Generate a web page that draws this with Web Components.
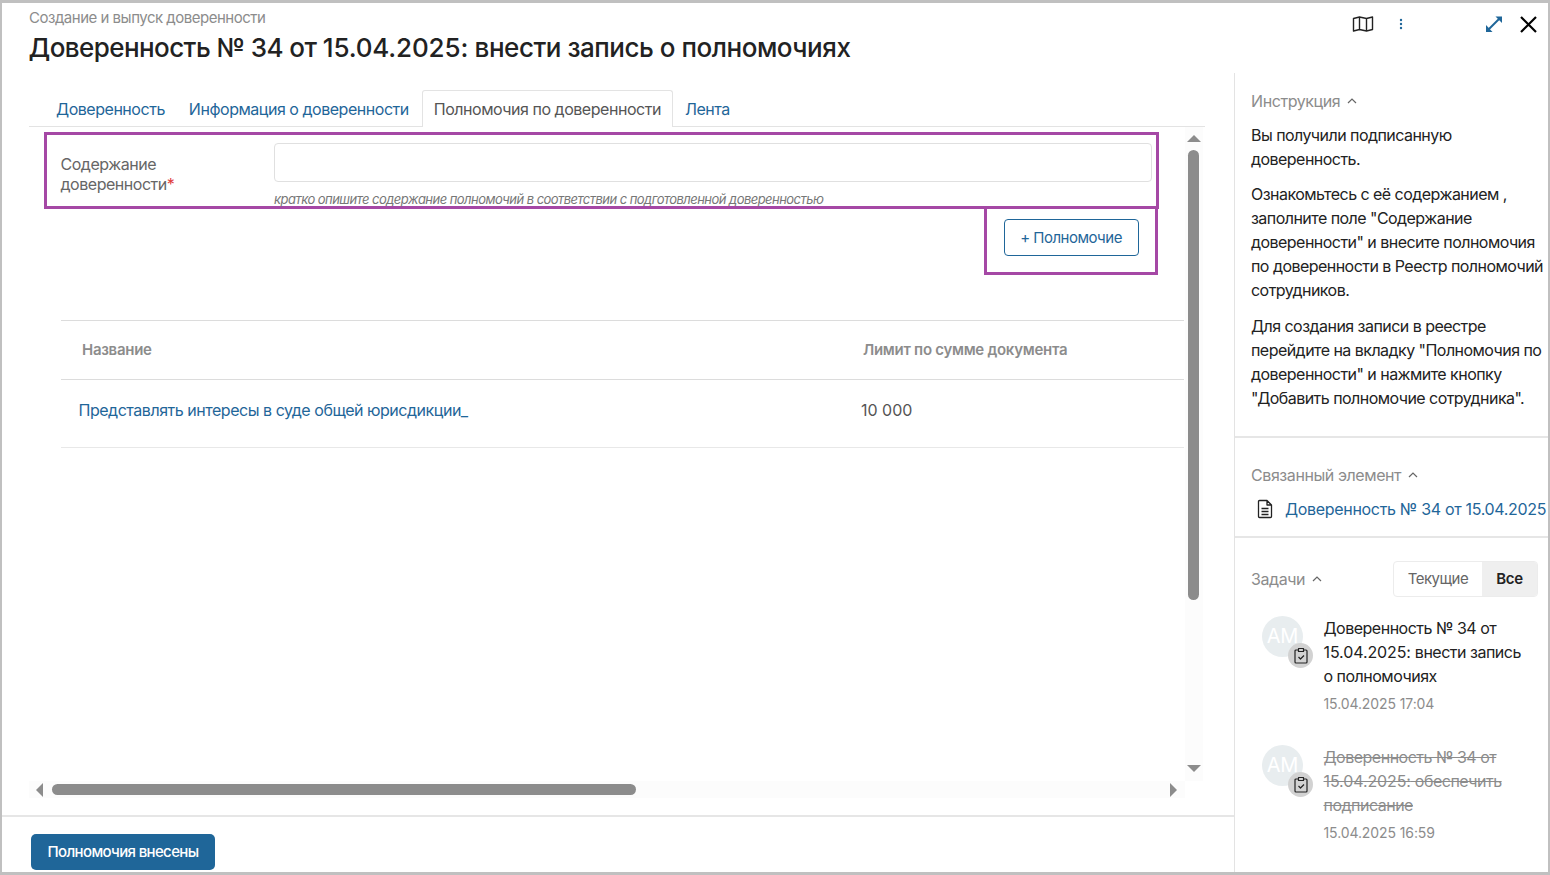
<!DOCTYPE html>
<html lang="ru">
<head>
<meta charset="utf-8">
<title>Доверенность</title>
<style>
  html, body { margin: 0; height: 100%; }
  body { font-family: Inter, "Noto Sans", sans-serif; color: #222; overflow: hidden; }
</style>
</head>
<body>
<task-page></task-page>

<template id="task-page-tpl">
  <style>
    :host { display: flex; flex-direction: column; box-sizing: border-box; width: 1550px; height: 875px; border: solid #c0c0c0; border-width: 3px 2px; background: #fff; }
    .top { height: 70px; flex: none; display: flex; justify-content: space-between; padding-left: 27px; box-sizing: border-box; }
    .crumb { font-size: 15px; line-height: 18px; margin-top: 6px; color: #8c8c8c; letter-spacing: -.49px; }
    h1 { margin: 5px 0 0 -.5px; font-size: 26px; line-height: 32px; font-weight: 500; letter-spacing: -.47px; color: #222; }
    h1 .lead { letter-spacing: -.57px; }
    h1 .date { letter-spacing: -.15px; }
    .actions { display: flex; align-items: flex-start; padding: 11px 10px 0 0; }
    .actions svg { display: block; }
    .body { flex: 1; min-height: 0; display: flex; }
    .main { width: 1232px; flex: none; display: flex; flex-direction: column; }
    .work { flex: 1; min-height: 0; padding: 17px 29px 0 27px; display: flex; flex-direction: column; }
    .foot { height: 57px; flex: none; box-sizing: border-box; border-top: 2px solid #e6e6e6; padding: 17px 0 0 29px; }
    .foot button { display: block; height: 36px; width: 184px; padding: 0 0 2px; border: 0; border-radius: 5px; background: #1f6699; color: #fff; font: 500 15px Inter, sans-serif; letter-spacing: -.65px; }
    aside { flex: 1; min-width: 0; border-left: 1px solid #e3e3e3; }
  </style>
  <div class="top">
    <div>
      <div class="crumb">Создание и выпуск доверенности</div>
      <h1><span class="lead">Доверенность № 34 от </span><span class="date">15.04.2025:</span> внести запись о полномочиях</h1>
    </div>
    <div class="actions">
      <svg width="22" height="18" viewBox="0 0 22 18" fill="none" stroke="#222" stroke-width="1.4" stroke-linejoin="round" style="margin:1px 25px 0 0"><path d="M1.500 3.500 7.500 2l7 1.500 6-1.500v12.500l-6 1.500-7-1.500-6 1.500zM7.500 2v12.500M14.500 3.500V16"/></svg>
      <svg width="4" height="12" viewBox="0 0 4 12" fill="#1f6699" style="margin:4px 81px 0 0"><circle cx="2" cy="2" r="1.2"/><circle cx="2" cy="6" r="1.2"/><circle cx="2" cy="10" r="1.2"/></svg>
      <svg width="20" height="20" viewBox="0 0 20 20" fill="none" stroke="#1f6699" stroke-width="2" style="margin-right:14px"><path d="M5 15 15 5"/><path d="M11.500 2.500H18V9z" fill="#1f6699" stroke="none"/><path d="M2 11v7h6.500z" fill="#1f6699" stroke="none"/></svg>
      <svg width="20" height="20" viewBox="0 0 20 20" fill="none" stroke="#000" stroke-width="2.200"><path d="M3 3 18 18M18 3 3 18"/></svg>
    </div>
  </div>
  <div class="body">
    <div class="main">
      <div class="work">
        <tab-bar></tab-bar>
        <scroll-pane>
          <power-form></power-form>
          <power-table></power-table>
        </scroll-pane>
      </div>
      <div class="foot"><button>Полномочия внесены</button></div>
    </div>
    <aside>
      <side-section heading="Инструкция" pad="16px 2px 26px 16px" divider>
        <p style="margin:0 0 11px">Вы получили подписанную доверенность.</p>
        <p style="margin:0 0 12px">Ознакомьтесь с её содержанием , заполните поле "Содержание доверенности" и внесите полномочия по доверенности в Реестр полномочий сотрудников.</p>
        <p style="margin:0">Для создания записи в реестре перейдите на вкладку "Полномочия по доверенности" и нажмите кнопку "Добавить полномочие сотрудника".</p>
      </side-section>
      <side-section heading="Связанный элемент" pad="25px 0 15px 16px" divider>
        <linked-doc>Доверенность № 34 от 15.04.2025</linked-doc>
      </side-section>
      <side-section heading="Задачи" pad="29px 10px 0 16px" toggle>
        <task-item when="15.04.2025 17:04">Доверенность № 34 от <span style="letter-spacing:-.1px">15.04.2025:</span> внести запись<br>о полномочиях</task-item>
        <task-item when="15.04.2025 16:59" done>Доверенность № 34 от <span style="letter-spacing:-.1px">15.04.2025:</span> обеспечить<br>подписание</task-item>
      </side-section>
    </aside>
  </div>
</template>

<template id="tab-bar-tpl">
  <style>
    :host { display: flex; flex: none; height: 37px; box-sizing: border-box; border-bottom: 1px solid #e3e3e3; padding-left: 15px; font-size: 16px; letter-spacing: -.47px; }
    a { display: block; padding: 0 12px; line-height: 38px; color: #1f6699; }
    a.on { color: #555; border: 1px solid #e3e3e3; border-bottom: 0; margin-left: 1px; height: 37px; line-height: 37px; background: #fff; border-radius: 3px 3px 0 0; box-sizing: border-box; padding: 0 11px; }
  </style>
  <a>Доверенность</a><a>Информация о доверенности</a><a class="on">Полномочия по доверенности</a><a>Лента</a>
</template>

<template id="scroll-pane-tpl">
  <style>
    :host { display: grid; flex: none; grid-template-columns: 1156px 18px; grid-template-rows: 654px 17px; height: 671px; }
    .view { overflow: hidden; min-width: 0; }
    .v, .h { background: #fcfcfc; position: relative; }
    .corner { background: #fff; }
    .thumb { position: absolute; background: #8c8c8c; border-radius: 6px; }
    .v .thumb { left: 3px; width: 11px; top: 23px; height: 450px; }
    .h .thumb { top: 3px; height: 11px; left: 23px; width: 584px; }
    i { position: absolute; width: 0; height: 0; border: solid transparent; }
    .up { left: 2px; top: 8px; border-width: 0 7px 7px; border-bottom-color: #8c8c8c; }
    .dn { left: 2px; top: 638px; border-width: 7px 7px 0; border-top-color: #8c8c8c; }
    .lf { left: 7px; top: 2px; border-width: 7px 7px 7px 0; border-right-color: #8c8c8c; }
    .rt { left: 1141px; top: 2px; border-width: 7px 0 7px 7px; border-left-color: #8c8c8c; }
  </style>
  <div class="view"><slot></slot></div>
  <div class="v"><i class="up"></i><div class="thumb"></div><i class="dn"></i></div>
  <div class="h"><i class="lf"></i><div class="thumb"></div><i class="rt"></i></div>
  <div class="corner"></div>
</template>

<template id="power-form-tpl">
  <style>
    :host { display: block; padding: 5px 0 0 15px; }
    .field { box-sizing: border-box; width: 1115px; height: 77px; border: 3px solid #a548a5; display: flex; padding: 8px 4px 0 13.500px; }
    .lbl { width: 213.500px; flex: none; padding-top: 11px; font-size: 16px; line-height: 20px; color: #666; letter-spacing: -.47px; }
    .lbl b { color: #e03c3c; font-weight: 400; }
    .ctl { flex: 1; min-width: 0; }
    .inp { height: 39px; box-sizing: border-box; border: 1px solid #e0e0e0; border-radius: 4px; background: #fff; }
    .hint { margin-top: 9px; font-size: 13px; line-height: 16px; font-style: italic; color: #777; letter-spacing: -.54px; white-space: nowrap; }
    .add { box-sizing: border-box; width: 174px; height: 68px; margin: -2px 0 0 940px; border: 3px solid #a548a5; border-top-width: 2px; padding: 10px 0 0 17px; }
    button { display: block; width: 135px; height: 37px; padding: 0 1px 0 0; box-sizing: border-box; background: #fff; border: 1px solid #1f6699; border-radius: 4px; color: #1f6699; font: 15px Inter, sans-serif; letter-spacing: -.5px; }
  </style>
  <div class="field">
    <div class="lbl">Содержание<br>доверенности<b>*</b></div>
    <div class="ctl">
      <div class="inp"></div>
      <div class="hint">кратко опишите содержание полномочий в соответствии с подготовленной доверенностью</div>
    </div>
  </div>
  <div class="add"><button>+ Полномочие</button></div>
</template>

<template id="power-table-tpl">
  <style>
    :host { display: block; margin: 45px 1px 0 32px; }
    .row { display: grid; grid-template-columns: 781px 1fr; border-bottom: 1px solid #e8e8e8; }
    .head { height: 60px; padding-bottom: 2px; align-items: center; border-top: 1px solid #dcdcdc; border-bottom-color: #dcdcdc; box-sizing: border-box; font-size: 15px; font-weight: 600; color: #8c8c8c; letter-spacing: -.28px; }
    .head span:first-child { padding-left: 21px; }
    .head span:last-child { padding-left: 21px; }
    .cell { height: 68px; padding-bottom: 8px; box-sizing: border-box; align-items: center; font-size: 16px; letter-spacing: -.47px; }
    .cell a { color: #1f6699; padding-left: 17.500px; }
    .cell span { color: #555; padding-left: 19px; letter-spacing: 0; }
  </style>
  <div class="row head"><span>Название</span><span>Лимит по сумме документа</span></div>
  <div class="row cell"><a>Представлять интересы в суде общей юрисдикции_</a><span>10 000</span></div>
</template>

<template id="side-section-tpl">
  <style>
    :host { display: block; font-size: 16px; line-height: 24px; color: #222; letter-spacing: -.54px; }
    :host([divider]) .wrap { border-bottom: 2px solid #e6e6e6; }
    .head { display: flex; align-items: center; height: 24px; color: #8c8c8c; font-size: 16px; letter-spacing: -.42px; margin-bottom: 10px; }
    .head svg { margin-left: 7px; }
    .seg { display: none; margin-left: auto; height: 36px; box-sizing: border-box; border: 1px solid #ececec; border-radius: 4px; font-size: 15px; color: #666; overflow: hidden; letter-spacing: -.5px; }
    .seg span { display: block; line-height: 34px; padding: 0 14px; }
    .seg span + span { background: #efefef; color: #222; font-weight: 600; letter-spacing: -.23px; }
    :host([toggle]) .seg { display: flex; }
    :host([toggle]) .head { margin-bottom: 25px; }
  </style>
  <div class="wrap">
    <div class="head">
      <span class="title"></span>
      <svg width="10" height="6" viewBox="0 0 10 6" fill="none" stroke="#666" stroke-width="1.200"><path d="M1 5 5 1l4 4"/></svg>
      <div class="seg"><span>Текущие</span><span>Все</span></div>
    </div>
    <slot></slot>
  </div>
</template>

<template id="linked-doc-tpl">
  <style>
    :host { display: flex; align-items: center; padding-left: 6px; font-size: 16px; color: #1f6699; letter-spacing: -.32px; white-space: nowrap; }
    svg { margin-right: 12px; flex: none; }
  </style>
  <svg width="16" height="20" viewBox="0 0 16 20" fill="none" stroke="#222" stroke-width="1.300" stroke-linejoin="round"><path d="M1.500 2.500a1 1 0 0 1 1-1H10l4.500 4.500v11.500a1 1 0 0 1-1 1h-11a1 1 0 0 1-1-1zM10 1.500V6h4.500M4.500 9.500h7M4.500 12.500h7M4.500 15.500h7"/></svg>
  <slot></slot>
</template>

<template id="task-item-tpl">
  <style>
    :host { display: flex; padding-left: 11px; margin-bottom: 29px; letter-spacing: -.5px; }
    .ava { position: relative; width: 41px; height: 41px; flex: none; margin: 0 20.500px 0 0; border-radius: 50%; background: #e8edef; color: #fff; font-size: 20px; line-height: 41px; text-align: center; letter-spacing: -.3px; white-space: nowrap; }
    .badge { position: absolute; left: 26px; top: 27px; width: 25px; height: 25px; border-radius: 50%; background: #d2d2d2; display: flex; align-items: center; justify-content: center; }
    .txt { min-width: 0; padding-right: 12px; color: #222; }
    :host([done]) .txt { color: #8c8c8c; text-decoration: line-through; }
    .when { margin-top: 4px; font-size: 14px; line-height: 24px; color: #8c8c8c; letter-spacing: -.1px; }
  </style>
  <div class="ava">АМ<span class="badge"><svg width="14" height="17" viewBox="0 0 14 17" fill="none" stroke="#222" stroke-width="1.200" stroke-linejoin="round"><path d="M4 3H2a1 1 0 0 0-1 1v11a1 1 0 0 0 1 1h10a1 1 0 0 0 1-1V4a1 1 0 0 0-1-1h-2M4.500 1.500h5V4.500h-5zM4.500 10l2 2 3.500-3.500"/></svg></span></div>
  <div>
    <div class="txt"><slot></slot></div>
    <div class="when"></div>
  </div>
</template>

<script>
  // общий базовый класс: клонирует шаблон в открытый shadow root
  class TplElement extends HTMLElement {
    constructor() {
      super();
      this.attachShadow({ mode: "open" });
      const tpl = document.getElementById(this.localName + "-tpl");
      this.shadowRoot.appendChild(tpl.content.cloneNode(true));
    }
  }

  class SideSection extends TplElement {
    connectedCallback() {
      this.shadowRoot.querySelector(".title").textContent = this.getAttribute("heading");
      this.shadowRoot.querySelector(".wrap").style.padding = this.getAttribute("pad");
    }
  }

  class TaskItem extends TplElement {
    connectedCallback() {
      this.shadowRoot.querySelector(".when").textContent = this.getAttribute("when");
    }
  }

  customElements.define("task-page", class extends TplElement {});
  customElements.define("tab-bar", class extends TplElement {});
  customElements.define("scroll-pane", class extends TplElement {});
  customElements.define("power-form", class extends TplElement {});
  customElements.define("power-table", class extends TplElement {});
  customElements.define("linked-doc", class extends TplElement {});
  customElements.define("side-section", SideSection);
  customElements.define("task-item", TaskItem);
</script>
</body>
</html>
